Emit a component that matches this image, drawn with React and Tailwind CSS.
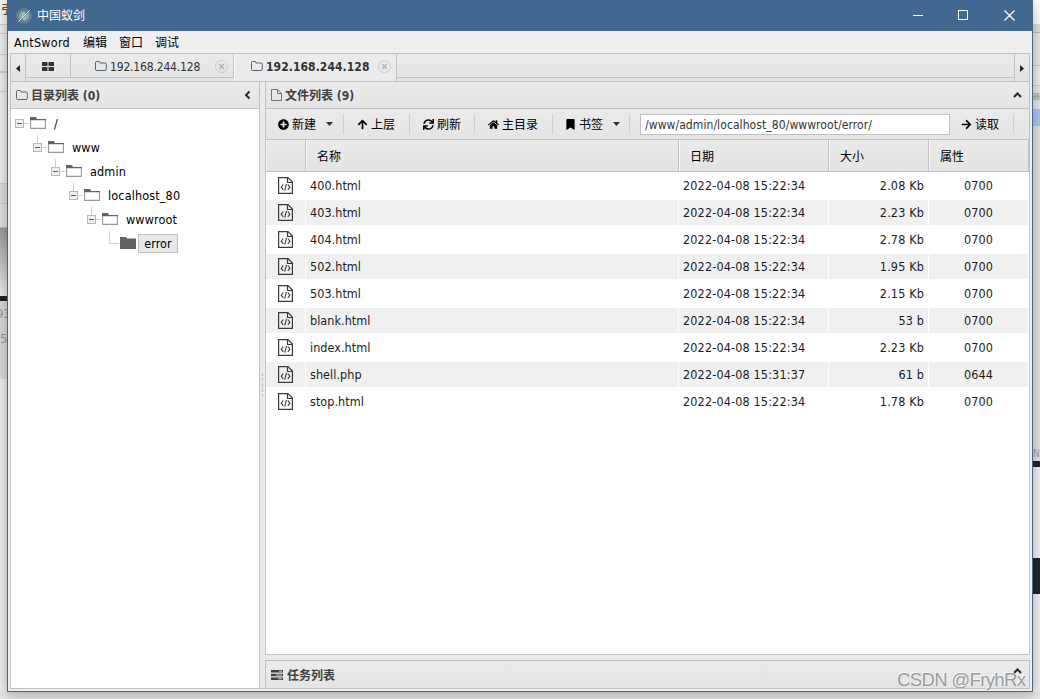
import React from 'react';
import { FaPlusCircle, FaArrowUp, FaArrowRight, FaSync, FaHome, FaBookmark } from 'react-icons/fa';

const TREE = [
    { name: '/' },
    { name: 'www' },
    { name: 'admin' },
    { name: 'localhost_80' },
    { name: 'wwwroot' },
    { name: 'error', leaf: true },
];

const FILES = [
    { name: '400.html', date: '2022-04-08 15:22:34', size: '2.08 Kb', mode: '0700' },
    { name: '403.html', date: '2022-04-08 15:22:34', size: '2.23 Kb', mode: '0700' },
    { name: '404.html', date: '2022-04-08 15:22:34', size: '2.78 Kb', mode: '0700' },
    { name: '502.html', date: '2022-04-08 15:22:34', size: '1.95 Kb', mode: '0700' },
    { name: '503.html', date: '2022-04-08 15:22:34', size: '2.15 Kb', mode: '0700' },
    { name: 'blank.html', date: '2022-04-08 15:22:34', size: '53 b', mode: '0700' },
    { name: 'index.html', date: '2022-04-08 15:22:34', size: '2.23 Kb', mode: '0700' },
    { name: 'shell.php', date: '2022-04-08 15:31:37', size: '61 b', mode: '0644' },
    { name: 'stop.html', date: '2022-04-08 15:22:34', size: '1.78 Kb', mode: '0700' },
];

// ── Icons ──
function Logo() {
    return (
        <svg className="w-4 h-4 shrink-0" viewBox="0 0 16 16" fill="none">
            <circle cx="8" cy="8" r="7.8" fill="#64808f" />
            <path d="M4.300 10.800C2.800 7.200 5 4 8.700 4.200M12 5.500c1.200 3.500-1 6.500-4.500 6.300" stroke="#a9bcc6" strokeWidth="1.300" />
            <path d="M2.500 13.500 13.500 2.500" stroke="#d5dfe4" strokeWidth="1" />
            <path d="M6 9.500 6.800 6.500 9 5.500M7 11l2.500-1.500L10.300 7" stroke="#d5dfe4" strokeWidth="1.100" />
        </svg>
    );
}

function FolderOutline({ className }) {
    return (
        <svg className={className} viewBox="0 0 12 10" fill="none" stroke="currentColor">
            <path d="M.5 8.500v-7q0-1 1-1h2.300q.7 0 .9.600l.2.900h5.100q1.300 0 1.300 1.200v5q0 1.300-1.300 1.300H1.800Q.5 9.500.5 8.500Z" strokeWidth=".9" />
        </svg>
    );
}

function PageOutline() {
    return (
        <svg className="w-[11px] h-3 shrink-0" viewBox="0 0 11 12" fill="none" stroke="#666">
            <path d="M.5.5h6l4 4v7H.5ZM6.500.5v4h4" strokeWidth=".9" />
        </svg>
    );
}

function CodeFile() {
    return (
        <svg className="w-[15px] h-[17px]" viewBox="0 0 15 17" fill="none" stroke="#3a3a3a">
            <path d="M.6.600h9.400L14.400 5v11.400H.6Z" strokeWidth="1.200" />
            <path d="M9.500.6v4.900h4.900" strokeWidth="1.200" />
            <path d="M5.300 7.500 3.200 10.200l2.100 2.600M9.800 7.500l2.100 2.700-2.100 2.600M8.500 6.800 6.700 13.600" strokeWidth="1.100" />
        </svg>
    );
}

function Close() {
    return (
        <svg className="w-[13px] h-[13px]" viewBox="0 0 13 13" fill="none">
            <circle cx="6.500" cy="6.500" r="6" stroke="#cacaca" />
            <path d="m4.200 4.200 4.600 4.600m0-4.600L4.200 8.800" stroke="#b9b9b9" strokeWidth="1.800" />
        </svg>
    );
}

function Caret() {
    return (
        <svg className="w-[7px] h-1" viewBox="0 0 7 4"><path d="M0 0h7L3.500 4Z" fill="#333" /></svg>
    );
}

function Chevron({ className }) {
    return (
        <svg className={className} viewBox="0 0 9 6" fill="none" stroke="#2b2b2b">
            <path d="m1 5 3.500-3.500L8 5" strokeWidth="2" />
        </svg>
    );
}

function TreeRow({ name, leaf, depth }) {
    return (
        <div className="flex items-center h-6" style={{ paddingLeft: depth * 18 }}>
            <svg className="w-[19px] h-6 shrink-0" viewBox="0 0 19 24" fill="none" shapeRendering="crispEdges">
                {depth > 0 && <path d={leaf ? 'M8.500 0v12.500H18' : 'M8.500 0v8'} stroke="#cfcfcf" />}
                {!leaf && (
                    <g>
                        <path d="M13 12.500h5" stroke="#cfcfcf" />
                        <rect x="4.500" y="8.500" width="8" height="8" fill="#eaf1f4" stroke="#a9bcc5" />
                        <path d="M6 12.500h5" stroke="#4d6470" />
                    </g>
                )}
            </svg>
            <svg className="w-4 h-3 shrink-0" viewBox="0 0 16 12">
                {leaf
                    ? <path d="M0 0h6l1 1.500h9V12H0Z" fill="#636363" />
                    : (
                        <g>
                            <path d="M.6 2.500h14.800v8.900H.6Z" fill="#fff" stroke="#999" strokeWidth="1.1" />
                            <path d="M0 0h6l1 2h9v1.200H0Z" fill="#636363" />
                        </g>
                    )}
            </svg>
            {leaf
                ? <span className="ml-[2px] w-10 h-[19px] border border-[#c1c1c1] bg-[#e8e8e8] text-center leading-[17px] text-[12.500px] tracking-[0.100px]">{name}</span>
                : <span className="ml-2 pt-px text-[12.500px] tracking-[0.150px]">{name}</span>}
        </div>
    );
}

function ToolButton({ icon, label, caret, className }) {
    return (
        <div className={`flex items-center h-5 border-r border-[#c3d3dc] shrink-0 ${className}`}>
            <span className="w-[14px] shrink-0 text-[11px]">{icon}</span>
            <span className="pt-[2px]">{label}</span>
            {caret && <span className="ml-[10px]"><Caret /></span>}
        </div>
    );
}

function Tab({ active }) {
    return (
        <div className={active
            ? 'flex items-center w-[163px] h-[27px] pb-[3px] pl-4 border-l border-l-white border-r border-r-[#c1c1c1] bg-[#ebebeb] font-bold text-[#333]'
            : 'flex items-center w-[163px] h-6 pl-6 border-r border-b border-[#c1c1c1] text-[#333]'}>
            <FolderOutline className="w-3 h-[10px] shrink-0 text-[#3c5870]" />
            <span className={active ? 'ml-[3px] pt-px w-[105px] text-[12px] tracking-[0.070px]' : 'ml-[3px] pt-[2px] w-[93px] text-[12px] tracking-[-0.170px]'}>192.168.244.128</span>
            <span className={active ? 'ml-[7px]' : 'ml-3 pt-px'}><Close /></span>
        </div>
    );
}

// ── Slices of the windows that sit behind ──
function LeftBackdrop() {
    return (
        <div className="w-[7px] h-full flex flex-col overflow-hidden bg-[#ededed] text-[#999]">
            <div className="h-6 pl-[1px] w-[16px] text-[12px] leading-5 text-[#333] bg-[#f4f4f4]">引</div>
            <div className="h-[10px] border-y border-[#ccc]"></div>
            <div className="h-[21px] border-b border-[#ccc]"></div>
            <div className="h-[17px] border-b border-[#ccc]"></div>
            <div className="h-5 border-y border-[#ccc]"></div>
            <div className="h-[91px]"></div>
            <div className="h-[21px] border-y border-[#ccc] bg-[#dedede]"></div>
            <div className="h-[24px] border-b border-[#bbb] bg-[#e2e2e2]"></div>
            <div className="h-[68px] bg-gradient-to-b from-[#999] to-[#eee]"></div>
            <div className="h-[5px] bg-[#20252d]"></div>
            <div className="h-[78px] bg-[#dadada] text-[13px] leading-[25px]">
                <div className="-ml-[4px] w-5">93</div>
                <div>5</div>
            </div>
        </div>
    );
}

function RightBackdrop() {
    return (
        <div className="w-[7px] h-full flex flex-col overflow-hidden bg-[#efefef]">
            <div className="h-6 bg-white"></div>
            <div className="h-[9px] bg-[#ddd] border-b border-[#bbb]"></div>
            <div className="h-[33px] bg-[#e6e6e6] border-b border-[#ccc]"></div>
            <div className="h-[20px] bg-[#ececec] border-b border-[#ccc]"></div>
            <div className="h-[23px] pt-[3px] bg-[#e6e6e6] text-[7px] text-[#999]">器</div>
            <div className="h-[17px] bg-[#a9c6f1]"></div>
            <div className="h-[320px] bg-[#e3e3e3]"></div>
            <div className="h-[15px] bg-[#e3e3e3] text-[10px] leading-[15px] text-[#999]">N</div>
            <div className="h-[6px] bg-[#20252d]"></div>
            <div className="h-[91px]"></div>
            <div className="h-9 bg-[#20252d]"></div>
        </div>
    );
}

function DirPanel() {
    return (
        <div className="w-[250px] flex flex-col border border-[#c1c1c1] bg-white">
            <div className="h-[27px] shrink-0 flex items-center px-[5px] border-b border-[#c1c1c1] bg-gradient-to-b from-[#ebebeb] to-[#e4e4e4] font-bold text-[#404040]">
                <FolderOutline className="w-3 h-[10px] shrink-0 text-[#555]" />
                <span className="ml-[3px] pt-[2px]">目录列表 (0)</span>
                <Chevron className="ml-auto w-[9px] h-[6px] -rotate-90 mr-[2px]" />
            </div>
            <div className="pt-[2px]">
                {TREE.map((node, i) => <TreeRow key={node.name} depth={i} {...node} />)}
            </div>
        </div>
    );
}

function FileTable() {
    const cols = 'grid grid-cols-[40px_373px_150px_100px_100px]';
    return (
        <div>
            <div className={`${cols} h-8 border-b border-[#c1c1c1] bg-gradient-to-b from-[#ebebeb] to-[#e3e3e3] leading-[34px]`}>
                {['', '名称', '日期', '大小', '属性'].map((label) => (
                    <div key={label} className="h-[31px] pl-[11px] border-r border-[#c1c1c1] shadow-[inset_1px_0_0_#f7f7f7]">{label}</div>
                ))}
            </div>
            <div className="pt-[1px] text-[12.500px] tracking-[0.150px] leading-[25px] text-[#1c1c1c]">
                {FILES.map((file, i) => (
                    <div key={file.name} className={`${cols} h-[25px] mb-[2px] ${i % 2 ? 'bg-[#f0f0f0]' : 'bg-white'}`}>
                        <div className="flex items-center pl-3 border-r border-white"><CodeFile /></div>
                        <div className="pl-1 border-r border-white tracking-[0.050px]">{file.name}</div>
                        <div className="pl-1 border-r border-white">{file.date}</div>
                        <div className="pr-1 text-right border-r border-white">{file.size}</div>
                        <div className="text-center border-r border-white">{file.mode}</div>
                    </div>
                ))}
            </div>
        </div>
    );
}

function FilePanel() {
    return (
        <div className="h-[574px] flex flex-col border border-[#c1c1c1] bg-white">
            <div className="h-[27px] shrink-0 flex items-center px-[5px] border-b border-[#c1c1c1] bg-gradient-to-b from-[#ebebeb] to-[#e4e4e4] font-bold text-[#404040]">
                <PageOutline />
                <span className="ml-[3px] pt-[2px]">文件列表 (9)</span>
                <Chevron className="ml-auto w-[9px] h-[6px] mr-[2px]" />
            </div>
            <div className="h-[31px] shrink-0 flex items-center border-b border-[#c1c1c1] bg-gradient-to-b from-[#ebebeb] to-[#e4e4e4]">
                <ToolButton className="w-[78px] pl-3" icon={<FaPlusCircle />} label="新建" caret />
                <ToolButton className="w-[66px] pl-[13px]" icon={<FaArrowUp />} label="上层" />
                <ToolButton className="w-[65px] pl-[13px]" icon={<FaSync />} label="刷新" />
                <ToolButton className="w-[78px] pl-[13px]" icon={<FaHome />} label="主目录" />
                <ToolButton className="w-[77px] pl-3" icon={<FaBookmark />} label="书签" caret />
                <input
                    className="ml-[10px] w-[310px] h-[21px] shrink-0 px-1 pt-px border border-[#c1c1c1] bg-white text-[12px] tracking-[0.080px] text-[#333]"
                    defaultValue="/www/admin/localhost_80/wwwroot/error/"
                />
                <ToolButton className="w-16 pl-[11px]" icon={<FaArrowRight />} label="读取" />
            </div>
            <FileTable />
        </div>
    );
}

function App() {
    return (
        <div className="relative w-[1040px] h-[699px] overflow-hidden bg-[#e6e6e6] font-['DejaVu_Sans_Condensed','Noto_Sans_CJK_SC',sans-serif] text-[12px] leading-4 text-black">
            <div className="flex h-[692px]">
                <LeftBackdrop />
                <div className="relative z-10 w-[1026px] flex flex-col border-x border-b border-[#41688f] bg-[#efefef] shadow-[0_2px_12px_rgba(0,0,0,0.300)]">
                    {/* ── Title bar ── */}
                    <div className="h-[31px] shrink-0 flex items-center pl-2 bg-[#41688f] text-white">
                        <Logo />
                        <span className="ml-[5px] pt-px">中国蚁剑</span>
                        <svg className="ml-auto mr-[16px] w-[103px] h-[11px]" viewBox="0 0 103 11" fill="none" stroke="#fff">
                            <path d="M0 5.500h10M45.500.5h9v9h-9Z" shapeRendering="crispEdges" />
                            <path d="m91.500.5 10 10m0-10-10 10" strokeWidth="1.2" />
                        </svg>
                    </div>
                    {/* ── Menu ── */}
                    <div className="h-[22px] shrink-0 flex items-center pl-[6px] pt-px">
                        <span className="w-[69px] text-[12.500px] tracking-[0.250px]">AntSword</span>
                        <span className="w-9">编辑</span>
                        <span className="w-9">窗口</span>
                        <span>调试</span>
                    </div>
                    <div className="w-[1020px] ml-[2px] flex flex-col">
                        {/* ── Tabs ── */}
                        <div className="h-7 flex border-x border-t border-[#c1c1c1] bg-gradient-to-b from-[#ebebeb] to-[#e3e3e3]">
                            <div className="w-[15px] pt-px flex items-center justify-center border-r border-[#c1c1c1]">
                                <svg className="w-1 h-[7px]" viewBox="0 0 4 7"><path d="M4 0v7L0 3.500Z" fill="#222" /></svg>
                            </div>
                            <div className="w-[45px] h-6 pt-px flex items-center justify-center border-r border-b border-[#c1c1c1]">
                                <svg className="w-3 h-[9px]" viewBox="0 0 12 9" fill="#333">
                                    <path d="M0 0h5.500v4H0ZM6.500 0H12v4H6.500ZM0 5h5.500v4H0ZM6.500 5H12v4H6.500Z" />
                                </svg>
                            </div>
                            <Tab />
                            <Tab active />
                            <div className="flex-1 h-6 border-b border-[#c1c1c1]"></div>
                            <div className="w-[15px] pt-px flex items-center justify-center border-l border-[#c1c1c1]">
                                <svg className="w-1 h-[7px]" viewBox="0 0 4 7"><path d="M0 0v7l4-3.500Z" fill="#222" /></svg>
                            </div>
                        </div>
                        {/* ── Body ── */}
                        <div className="h-[608px] flex">
                            <DirPanel />
                            <div className="w-[5px] flex items-center justify-center border-y border-[#c1c1c1] bg-[#ebebeb]">
                                <div className="h-6 border-l border-dashed border-[#bbb]"></div>
                            </div>
                            <div className="w-[765px] flex flex-col gap-[5px] bg-[#ebebeb]">
                                <FilePanel />
                                <div className="h-[29px] flex items-center px-[5px] border border-[#c1c1c1] bg-gradient-to-b from-[#ebebeb] to-[#e4e4e4] font-bold text-[#404040]">
                                    <svg className="w-3 h-[10px]" viewBox="0 0 12 10" fill="#404040">
                                        <path d="M0 0h12v2.600H0ZM0 3.700h12v2.600H0ZM0 7.400h12V10H0Z" />
                                        <path d="M8 .8h3v1H8ZM5 4.500h6v1H5ZM7 8.200h4v1H7Z" fill="#ccc" />
                                    </svg>
                                    <span className="ml-1 pt-[2px]">任务列表</span>
                                    <Chevron className="ml-auto mb-[8px] w-[9px] h-[6px] mr-[2px]" />
                                </div>
                            </div>
                        </div>
                    </div>
                </div>
                <RightBackdrop />
            </div>
            <div className="absolute z-20 left-[897px] top-[668px] font-['Liberation_Sans',sans-serif] text-[18.500px] tracking-[-0.640px] leading-6 whitespace-nowrap text-[#9c9c9c] [text-shadow:-1px_-1px_0_#f8f8f8]">
                CSDN @FryhRx
            </div>
        </div>
    );
}

export default App;
